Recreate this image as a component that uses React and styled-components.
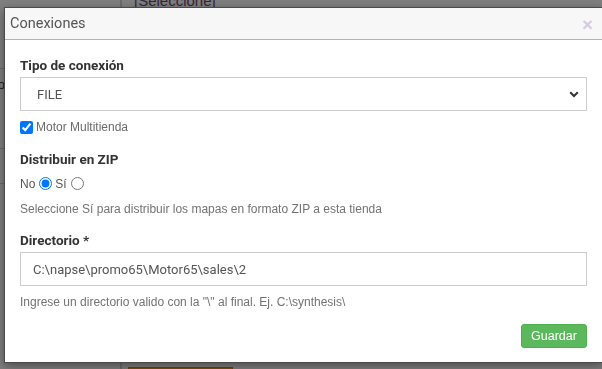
import styled, { createGlobalStyle } from 'styled-components'

const GlobalStyle = createGlobalStyle`
  html, body {
    margin: 0;
    padding: 0;
    height: 100%;
    overflow: hidden;
    background: #fff;
    font-family: 'Liberation Sans', Arial, sans-serif;
  }
  #root { height: 100%; }
`

const Page = styled.div`
  display: flex;
  height: 100%;
  position: relative;
`

const Sidebar = styled.aside`
  width: 120px;
  flex: none;
  border-right: 2px solid #d6d6d6;
  display: flex;
  flex-direction: column;
  padding-top: 68px;
`

const SideItem = styled.div`
  height: ${p => p.h}px;
  border-top: 1px solid #d0d0d0;
  font: 13px 'Liberation Sans', Arial, sans-serif;
  color: #333;
  display: flex;
  justify-content: flex-end;
  align-items: flex-start;
  padding: 8px 115px 0 0;
  box-sizing: border-box;
  white-space: nowrap;
  overflow: hidden;
`

const Content = styled.main`
  flex: 1;
  display: flex;
  flex-direction: column;
  justify-content: space-between;
  padding: 0 0 0 6px;
`

const PageSelect = styled.div`
  margin-top: -8px;
  font: 15px 'Liberation Sans', Arial, sans-serif;
  color: #6a4a6a;
  padding-left: 6px;
`

const PageButton = styled.div`
  width: 103px;
  height: 1px;
  background: #f0a020;
  border: 1px solid #d08a10;
  border-bottom: none;
`

const Backdrop = styled.div`
  position: fixed;
  inset: 0;
  background: rgba(0, 0, 0, 0.5);
`

const Modal = styled.div`
  position: absolute;
  top: 7px;
  left: 4px;
  width: 597px;
  background: #fff;
  border: 1px solid #4a4a4a;
  box-shadow: 0 3px 9px rgba(0, 0, 0, 0.4);
  display: flex;
  flex-direction: column;
`

const Header = styled.header`
  height: 31px;
  background: #f7f7f7;
  border-bottom: 1px solid #f0ad2e;
  display: flex;
  align-items: center;
  justify-content: space-between;
  padding: 0 9px 0 5px;
`

const Title = styled.h4`
  margin: 0;
  font: 400 14.5px 'Roboto', 'Liberation Sans', sans-serif;
  color: #555;
`

const Close = styled.span`
  font: 700 19px 'Liberation Sans', Arial, sans-serif;
  color: #d4cbe0;
  line-height: 1;
  margin-top: 1px;
`

const Body = styled.section`
  padding: 16px 15px 0 15px;
  display: flex;
  flex-direction: column;
`

const Label = styled.label`
  font: 700 13.5px 'Roboto', 'Liberation Sans', sans-serif;
  color: #333;
  line-height: 18px;
  margin-top: ${p => p.mt ?? 0}px;
  margin-bottom: ${p => p.mb ?? 3}px;
`

const Field = styled.div`
  height: 32px;
  border: 1px solid #ccc;
  display: flex;
  align-items: center;
  justify-content: space-between;
  padding: 0 7px 0 ${p => p.pl}px;
  font: 400 13px 'Roboto', 'Liberation Sans', sans-serif;
  color: #555;
`

const Check = styled.label`
  display: flex;
  align-items: center;
  height: 14px;
  margin: 9px 0 0;
  font: 12px 'Liberation Sans', Arial, sans-serif;
  color: #6b6b6b;
  gap: 3px;

  input {
    margin: 0;
    width: 13px;
    height: 13px;
  }
`

const RadioRow = styled.div`
  display: flex;
  align-items: center;
  height: 15px;
  font: 12px 'Liberation Sans', Arial, sans-serif;
  color: #555;

  input {
    margin: 0 3px 0 4px;
    width: 13px;
    height: 13px;
  }
`

const Help = styled.p`
  margin: ${p => p.mt}px 0 0;
  font: 12px/14px 'Liberation Sans', Arial, sans-serif;
  color: #737373;
`

const Footer = styled.footer`
  display: flex;
  justify-content: flex-end;
  padding: 15px 15px 14px;
`

const SaveButton = styled.button`
  height: 24px;
  width: 66px;
  background: #5cb85c;
  border: 1px solid #4cae4c;
  border-radius: 3px;
  color: #fff;
  font: 12.5px 'Liberation Sans', Arial, sans-serif;
  padding: 0;
`

const Chevron = () => (
  <svg width="10" height="7" viewBox="0 0 10 7">
    <path d="M1.2 1.2 L5 5 L8.8 1.2" fill="none" stroke="#333" strokeWidth="2" />
  </svg>
)

const App = () => {
  return (
    <>
      <GlobalStyle />
      <Page>
        <Sidebar>
          <SideItem h={80}>Producto</SideItem>
          <SideItem h={35} />
          <SideItem h={100} />
        </Sidebar>
        <Content>
          <PageSelect>[Seleccione]</PageSelect>
          <PageButton />
        </Content>
        <Backdrop />
        <Modal>
          <Header>
            <Title>Conexiones</Title>
            <Close>×</Close>
          </Header>
          <Body>
            <Label>Tipo de conexión</Label>
            <Field pl={16}>
              <span>FILE</span>
              <Chevron />
            </Field>
            <Check>
              <input type="checkbox" defaultChecked />
              Motor Multitienda
            </Check>
            <Label mt={16} mb={8}>Distribuir en ZIP</Label>
            <RadioRow>
              No<input type="radio" name="zip" defaultChecked />
              Sí<input type="radio" name="zip" />
            </RadioRow>
            <Help mt={11}>Seleccione Sí para distribuir los mapas en formato ZIP a esta tienda</Help>
            <Label mt={15}>Directorio *</Label>
            <Field pl={12}>
              <span>C:\napse\promo65\Motor65\sales\2</span>
            </Field>
            <Help mt={9}>Ingrese un directorio valido con la "\" al final. Ej. C:\synthesis\</Help>
          </Body>
          <Footer>
            <SaveButton>Guardar</SaveButton>
          </Footer>
        </Modal>
      </Page>
    </>
  )
}

export default App
